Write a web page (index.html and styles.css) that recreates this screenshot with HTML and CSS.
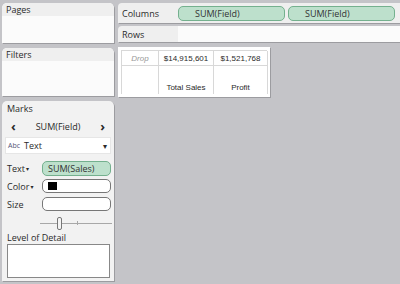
FILE: index.html
```html
<!DOCTYPE html>
<html>
<head>
<meta charset="utf-8">
<link rel="stylesheet" href="styles.css">
</head>
<body>
<div class="app">
  <div class="side">
    <section class="card pages">
      <div class="card-head">Pages</div>
      <div class="card-body"></div>
    </section>
    <section class="card filters">
      <div class="card-head">Filters</div>
      <div class="card-body"></div>
    </section>
    <section class="card marks">
      <div class="marks-title">Marks</div>
      <div class="nav-row">
        <span class="chev">&#8249;</span>
        <span>SUM(Field)</span>
        <span class="chev">&#8250;</span>
      </div>
      <div class="select">
        <span class="abc">Abc</span>
        <span class="sel-text">Text</span>
        <span class="caret">&#9662;</span>
      </div>
      <div class="prop">
        <span class="prop-label">Text<span class="mini">&#9662;</span></span>
        <span class="pill pill-sm">SUM(Sales)</span>
      </div>
      <div class="prop">
        <span class="prop-label">Color<span class="mini">&#9662;</span></span>
        <span class="box"><span class="swatch"></span></span>
      </div>
      <div class="prop">
        <span class="prop-label">Size</span>
        <span class="box"></span>
      </div>
      <div class="slider">
        <span class="track"></span>
        <span class="thumb"></span>
        <span class="tick"></span>
      </div>
      <div class="lod-label">Level of Detail</div>
      <div class="lod"></div>
    </section>
  </div>
  <div class="main">
    <div class="shelf cols">
      <div class="shelf-label">Columns</div>
      <div class="shelf-pills">
        <span class="pill">SUM(Field)</span>
        <span class="pill">SUM(Field)</span>
      </div>
    </div>
    <div class="shelf rows">
      <div class="shelf-label">Rows</div>
      <div class="shelf-area"></div>
    </div>
    <div class="viz">
      <div class="grid">
        <div class="cell drop">Drop</div>
        <div class="cell num">$14,915,601</div>
        <div class="cell num">$1,521,768</div>
        <div class="cell hdr"></div>
        <div class="cell hdr">Total Sales</div>
        <div class="cell hdr">Profit</div>
      </div>
    </div>
  </div>
</div>
</body>
</html>
```
FILE: styles.css
```css
html, body {
  margin: 0;
  padding: 0;
  background: #c4c4c8;
  width: 400px;
  height: 284px;
  overflow: hidden;
}
body {
  font-family: "Open Sans", "DejaVu Sans", sans-serif;
  font-size: 9px;
  color: #2a2a2a;
}
.app {
  display: flex;
  gap: 4px;
  padding: 3px 0 0 2px;
}
.side {
  width: 112px;
  display: flex;
  flex-direction: column;
  gap: 5px;
  flex: none;
}
.card {
  background: #fbfbfb;
  border-radius: 5px 5px 0 0;
  box-shadow: 1px 1px 0 #9c9ca0;
  box-sizing: border-box;
  display: flex;
  flex-direction: column;
}
.card-head {
  background: #efefef;
  border-radius: 5px 5px 0 0;
  height: 13px;
  line-height: 13px;
  padding-left: 4px;
}
.pages { height: 40px; }
.filters { height: 48px; }
.marks {
  height: 180px;
  background: #f2f2f2;
  padding: 0 3px 0 3px;
}
.marks-title {
  height: 14px;
  line-height: 15px;
  padding-left: 2px;
}
.nav-row {
  display: flex;
  justify-content: space-between;
  align-items: center;
  height: 22px;
  padding: 0 6px 0 6px;
}
.chev {
  font-weight: bold;
  font-size: 13px;
  line-height: 10px;
}
.select {
  display: flex;
  align-items: center;
  background: #fff;
  height: 17px;
  margin-bottom: 5px;
  padding: 0 4px 0 3px;
  box-shadow: inset 0 0 0 1px #e6e6e6;
}
.abc { font-size: 7px; color: #557; margin-right: 4px; }
.sel-text { flex: 1; }
.caret { font-size: 8px; }
.prop {
  display: flex;
  align-items: center;
  height: 18px;
}
.prop-label {
  width: 35px;
  padding-left: 2px;
  flex: none;
}
.mini { font-size: 6px; margin-left: 1px; vertical-align: 1px; }
.pill {
  display: flex;
  align-items: center;
  box-sizing: border-box;
  background: #bde0cc;
  border: 1px solid #74b08e;
  border-radius: 5px;
  height: 15px;
  color: #333;
}
.pill-sm {
  width: 72px;
  padding-left: 5px;
}
.box {
  display: flex;
  align-items: center;
  box-sizing: border-box;
  width: 72px;
  height: 14px;
  background: #fff;
  border: 1px solid #777;
  border-radius: 5px;
  padding-left: 5px;
}
.swatch {
  width: 9px;
  height: 8px;
  background: #000;
}
.slider {
  position: relative;
  height: 18px;
  margin-left: 35px;
  width: 72px;
}
.track {
  position: absolute;
  left: 0; right: 0; top: 10px;
  height: 1px;
  background: #a8a8a8;
}
.tick {
  position: absolute;
  left: 37px; top: 8px;
  width: 1px; height: 4px;
  background: #a8a8a8;
}
.thumb {
  position: absolute;
  left: 17px; top: 4px;
  width: 5px; height: 13px;
  box-sizing: border-box;
  border: 1px solid #777;
  border-radius: 2px;
  background: #f4f4f4;
}
.lod-label {
  height: 13px;
  line-height: 13px;
  padding-left: 2px;
}
.lod {
  height: 32px;
  background: #fff;
  border: 1px solid #888;
  margin: 0 1px 0 2px;
}
.main {
  flex: 1;
  display: flex;
  flex-direction: column;
}
.shelf {
  display: flex;
  box-shadow: 1px 1px 0 #9c9ca0;
  border-radius: 4px 0 0 0;
  background: #efefef;
}
.cols { height: 20px; margin-bottom: 3px; }
.rows { height: 16px; margin-bottom: 5px; }
.shelf-label {
  width: 60px;
  flex: none;
  padding-left: 4px;
  box-sizing: border-box;
  display: flex;
  align-items: center;
}
.shelf-pills {
  display: flex;
  gap: 3px;
  align-items: center;
  padding-right: 3px;
  flex: 1;
}
.shelf-pills .pill {
  width: 107px;
  padding-left: 16px;
}
.shelf-area {
  flex: 1;
  background: #fbfbfb;
}
.viz {
  width: 152px;
  height: 50px;
  background: #fff;
  box-shadow: 1px 1px 0 #9c9ca0;
  padding: 3px 3px 0 3px;
  box-sizing: border-box;
}
.grid {
  display: grid;
  grid-template-columns: 37px 55px 54px;
  grid-template-rows: 15px 28px;
  font-family: "Liberation Sans", Arial, sans-serif;
  font-size: 8px;
  border-left: 1px solid #d8d8d8;
  border-top: 1px solid #d8d8d8;
}
.cell {
  border-right: 1px solid #d8d8d8;
  border-bottom: 1px solid #d8d8d8;
  display: flex;
  align-items: center;
  justify-content: center;
}
.drop { font-style: italic; color: #999; }
.hdr { align-items: flex-end; padding-bottom: 2px; border-bottom: none; }
```
